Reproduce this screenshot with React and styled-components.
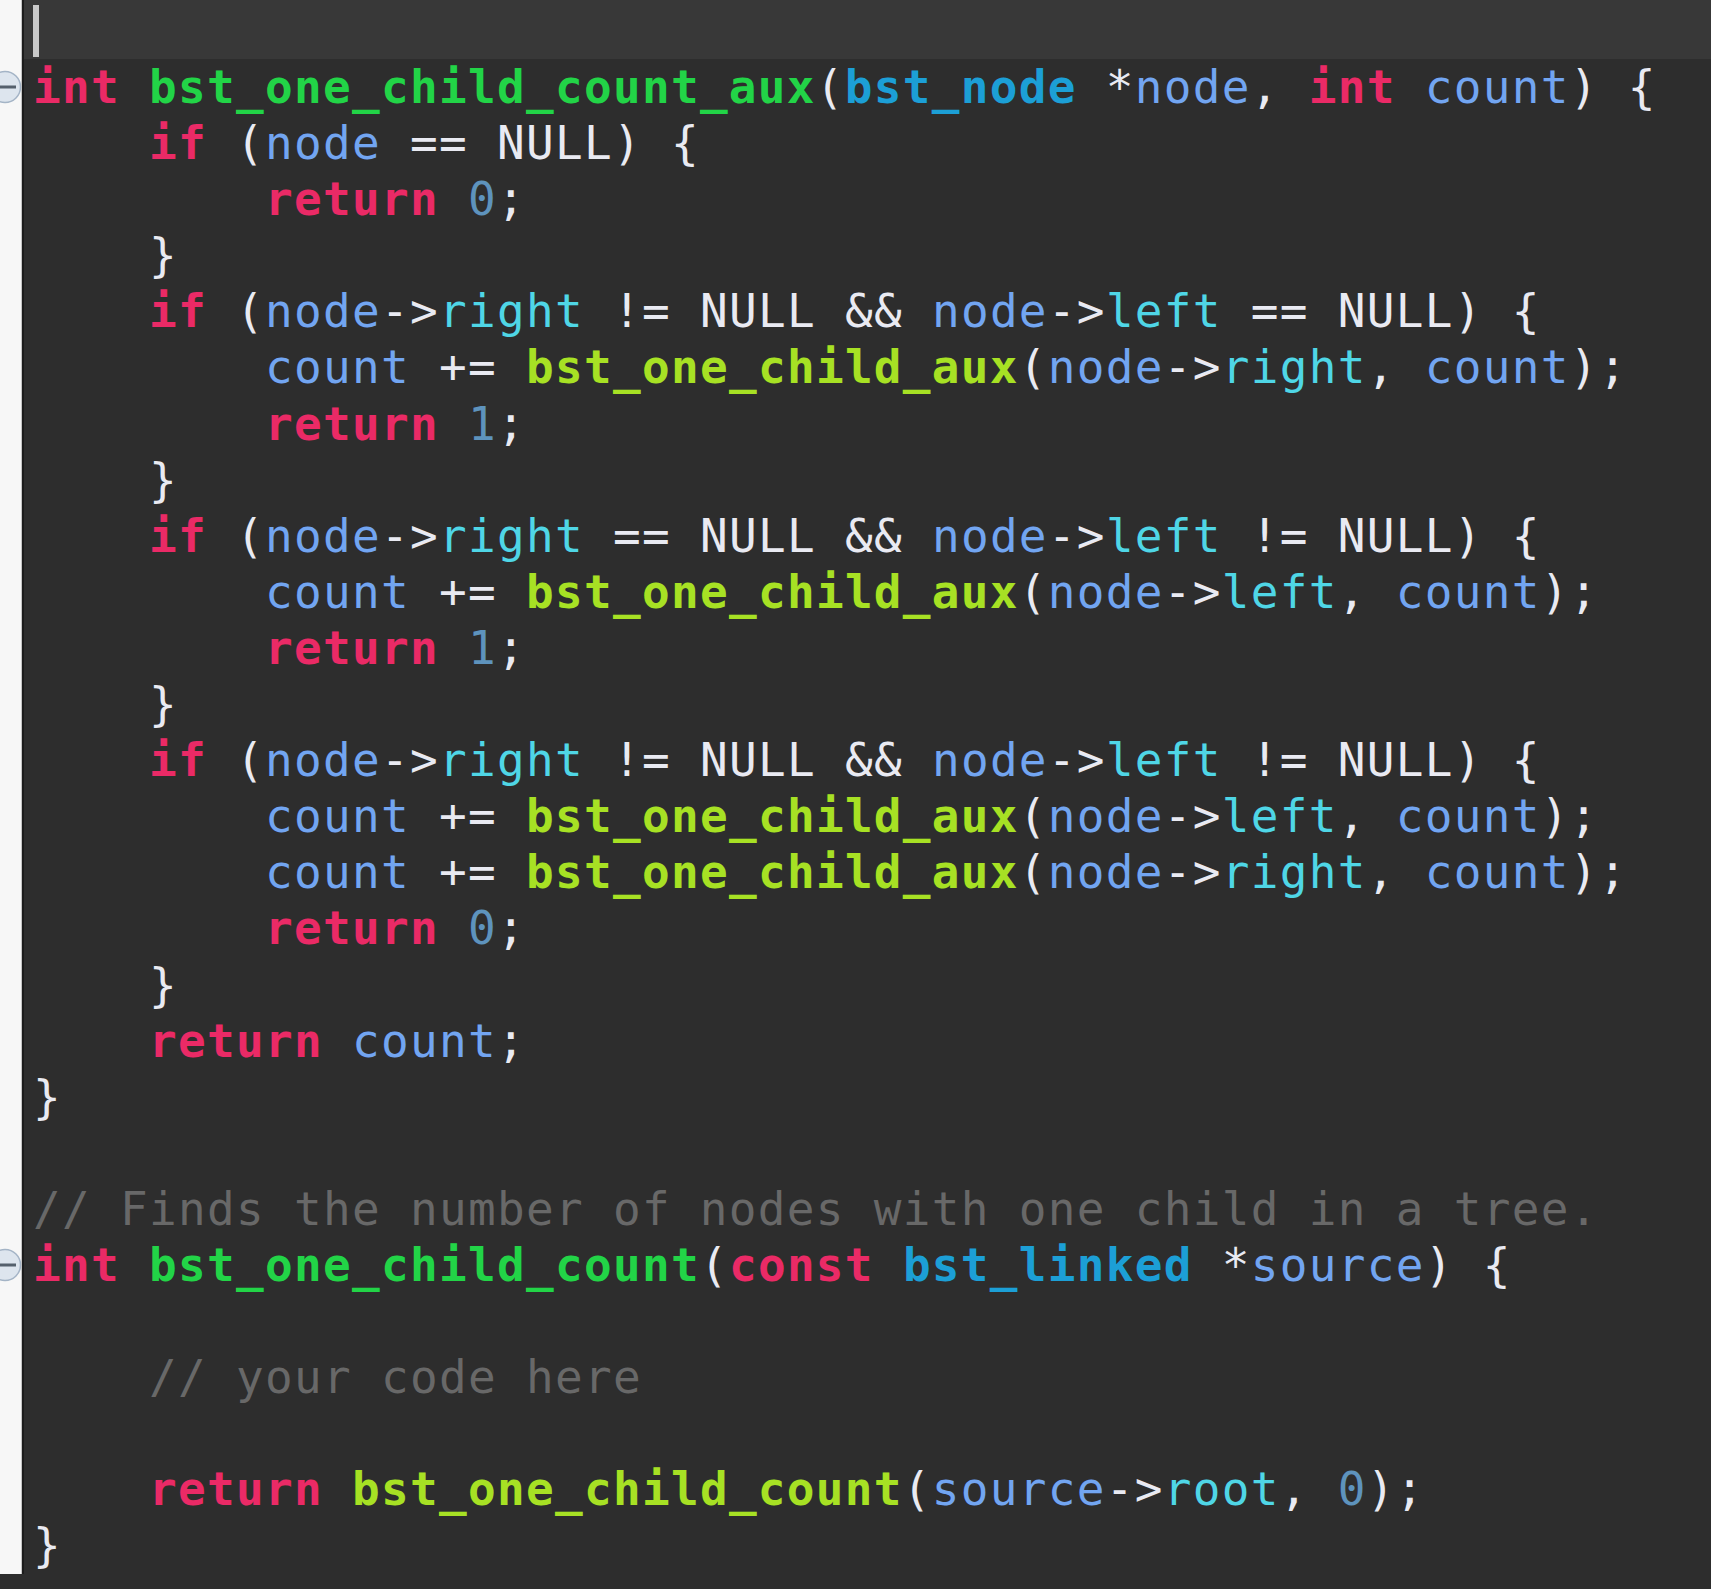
import React from 'react';
import styled, { createGlobalStyle } from 'styled-components';

const GlobalStyle = createGlobalStyle`
      html, body {
            margin: 0;
            padding: 0;
            background: #2d2d2d;
            overflow: hidden;
      }
`

const Editor = styled.div`
      width: 1711px;
      height: 1589px;
      display: flex;
      flex-direction: column;
      background: #2d2d2d;
      font-family: "DejaVu Sans Mono", "Liberation Mono", monospace;
      font-size: 46px;
      letter-spacing: 1.3px;
      overflow: hidden;
`

const Row = styled.div`
      display: grid;
      grid-template-columns: 24px 1fr;
      height: ${p => p.$h || 56.1}px;
      flex-shrink: 0;
      background: ${p => p.$current ? '#383838' : 'transparent'};
`

const Gutter = styled.div`
      background: #f7f7f7;
      border-right: 2px solid #1c1c1c;
      box-shadow: inset -1px 0 0 #c4c4c4;
      display: flex;
      align-items: center;
      overflow: hidden;

      svg {
            flex-shrink: 0;
            display: block;
      }
`

const Code = styled.div`
      padding-left: 9px;
      line-height: 56.1px;
      white-space: pre;
      color: #e9eaf2;
      display: flex;
      align-items: ${p => p.$current ? 'center' : 'stretch'};
`

const Caret = styled.span`
      display: inline-block;
      width: 6px;
      height: 52px;
      background: #c9c9c9;
      margin-top: 2px;
`

const colors = {
      kw: '#ea2a66',
      fn: '#22d447',
      call: '#a7e124',
      type: '#1c9fd6',
      v: '#72a5f1',
      f: '#4fd6e6',
      n: '#5e93bd',
      c: '#686868',
      p: '#e9eaf2',
}

const bold = { kw: 1, fn: 1, call: 1, type: 1 };

const Tok = styled.span`
      color: ${p => colors[p.$k]};
      font-weight: ${p => bold[p.$k] ? 700 : 400};
`

const FoldMark = () => (
      <svg width="22" height="36" viewBox="0 0 22 36">
            <circle cx="5" cy="18" r="15.5" fill="#dde5ee" stroke="#a4b4c6" strokeWidth="1.5" />
            <rect x="-4" y="16.5" width="20" height="3" fill="#55606c" />
      </svg>
)

// [kind:text] marks a coloured token, the rest is plain
const parse = (src) => {
      const out = [];
      const re = /\[(\w+):([^\]]*)\]/g;
      let last = 0;
      let m;
      while ((m = re.exec(src))) {
            if (m.index > last) out.push(['p', src.slice(last, m.index)]);
            out.push([m[1], m[2]]);
            last = re.lastIndex;
      }
      if (last < src.length) out.push(['p', src.slice(last)]);
      return out;
}

const lines = [
      { fold: true, src: '[kw:int] [fn:bst_one_child_count_aux]([type:bst_node] *[v:node], [kw:int] [v:count]) {' },
      { src: '    [kw:if] ([v:node] == NULL) {' },
      { src: '        [kw:return] [n:0];' },
      { src: '    }' },
      { src: '    [kw:if] ([v:node]->[f:right] != NULL && [v:node]->[f:left] == NULL) {' },
      { src: '        [v:count] += [call:bst_one_child_aux]([v:node]->[f:right], [v:count]);' },
      { src: '        [kw:return] [n:1];' },
      { src: '    }' },
      { src: '    [kw:if] ([v:node]->[f:right] == NULL && [v:node]->[f:left] != NULL) {' },
      { src: '        [v:count] += [call:bst_one_child_aux]([v:node]->[f:left], [v:count]);' },
      { src: '        [kw:return] [n:1];' },
      { src: '    }' },
      { src: '    [kw:if] ([v:node]->[f:right] != NULL && [v:node]->[f:left] != NULL) {' },
      { src: '        [v:count] += [call:bst_one_child_aux]([v:node]->[f:left], [v:count]);' },
      { src: '        [v:count] += [call:bst_one_child_aux]([v:node]->[f:right], [v:count]);' },
      { src: '        [kw:return] [n:0];' },
      { src: '    }' },
      { src: '    [kw:return] [v:count];' },
      { src: '}' },
      { src: '' },
      { src: '[c:// Finds the number of nodes with one child in a tree.]' },
      { fold: true, src: '[kw:int] [fn:bst_one_child_count]([kw:const] [type:bst_linked] *[v:source]) {' },
      { src: '' },
      { src: '    [c:// your code here]' },
      { src: '' },
      { src: '    [kw:return] [call:bst_one_child_count]([v:source]->[f:root], [n:0]);' },
      { src: '}' },
]

const App = () => {
      return (
            <Editor>
                  <GlobalStyle />
                  <Row $current $h={59}>
                        <Gutter />
                        <Code $current>
                              <Caret />
                        </Code>
                  </Row>
                  {lines.map((line, i) => (
                        <Row key={i}>
                              <Gutter>{line.fold && <FoldMark />}</Gutter>
                              <Code>
                                    <span>
                                          {parse(line.src).map(([k, text], j) => (
                                                <Tok key={j} $k={k}>{text}</Tok>
                                          ))}
                                    </span>
                              </Code>
                        </Row>
                  ))}
            </Editor>
      );
}

export default App;
